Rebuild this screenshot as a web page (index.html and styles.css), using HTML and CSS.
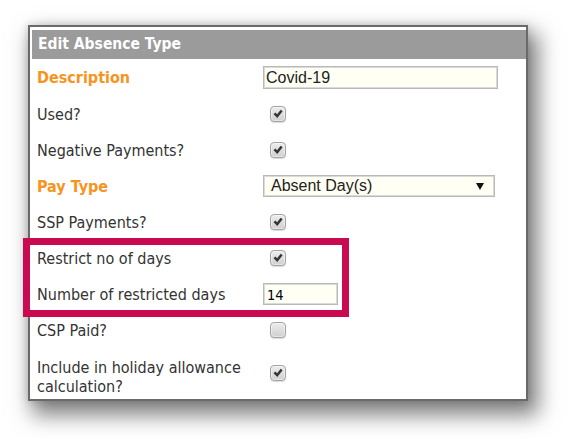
FILE: index.html
```html
<!DOCTYPE html>
<html>
<head>
<meta charset="utf-8">
<link rel="stylesheet" href="styles.css">
</head>
<body>
<div class="frame">
  <div class="header">Edit Absence Type</div>
  <div class="form">
    <div class="row row-first">
      <div class="label req">Description</div>
      <div class="ctrl"><input class="text desc" type="text" value="Covid-19"></div>
    </div>
    <div class="row">
      <div class="label">Used?</div>
      <div class="ctrl"><span class="cb checked"><svg viewBox="0 0 16 16"><polygon points="2.9,8.3 5,6.3 7,8.4 11.1,3.1 13.3,4.9 7.2,12.7"/></svg></span></div>
    </div>
    <div class="row">
      <div class="label">Negative Payments?</div>
      <div class="ctrl"><span class="cb checked"><svg viewBox="0 0 16 16"><polygon points="2.9,8.3 5,6.3 7,8.4 11.1,3.1 13.3,4.9 7.2,12.7"/></svg></span></div>
    </div>
    <div class="row">
      <div class="label req">Pay Type</div>
      <div class="ctrl">
        <div class="select"><span>Absent Day(s)</span><svg class="arrow" viewBox="0 0 8 7"><polygon points="0,0 8,0 4,7"/></svg></div>
      </div>
    </div>
    <div class="row">
      <div class="label">SSP Payments?</div>
      <div class="ctrl"><span class="cb checked"><svg viewBox="0 0 16 16"><polygon points="2.9,8.3 5,6.3 7,8.4 11.1,3.1 13.3,4.9 7.2,12.7"/></svg></span></div>
    </div>
    <div class="row">
      <div class="label">Restrict no of days</div>
      <div class="ctrl"><span class="cb checked"><svg viewBox="0 0 16 16"><polygon points="2.9,8.3 5,6.3 7,8.4 11.1,3.1 13.3,4.9 7.2,12.7"/></svg></span></div>
    </div>
    <div class="row">
      <div class="label">Number of restricted days</div>
      <div class="ctrl"><input class="text num" type="text" value="14"></div>
    </div>
    <div class="row">
      <div class="label">CSP Paid?</div>
      <div class="ctrl"><span class="cb"></span></div>
    </div>
    <div class="row row-last">
      <div class="label two">Include in holiday allowance calculation?</div>
      <div class="ctrl"><span class="cb checked"><svg viewBox="0 0 16 16"><polygon points="2.9,8.3 5,6.3 7,8.4 11.1,3.1 13.3,4.9 7.2,12.7"/></svg></span></div>
    </div>
  </div>
  <div class="highlight"></div>
</div>
</body>
</html>
```

FILE: styles.css
```css
html, body {
  margin: 0;
  padding: 0;
  background: #ffffff;
}

body {
  font-family: "DejaVu Sans", Verdana, sans-serif;
  font-stretch: condensed;
  min-height: 439px;
  padding-bottom: 38px;
  box-sizing: border-box;
}

.frame {
  position: relative;
  box-sizing: border-box;
  margin: 25px 0 0 28px;
  width: 500px;
  height: 376px;
  border: 2px solid #6a6a6a;
  padding: 3px 0 0 2px;
  background: #ffffff;
  box-shadow: 7px 11px 20px 3px rgba(0, 0, 0, 0.5), 0 0 8px rgba(0, 0, 0, 0.15);
}

.header {
  height: 29px;
  background: #9b9b9b;
  color: #ffffff;
  font-weight: bold;
  font-size: 15.5px;
  line-height: 29px;
  padding-left: 6px;
}

.form {
  margin-left: -2px;
}

.row {
  display: flex;
  align-items: center;
  height: 36px;
}

.row-first {
  height: 37px;
}

.row-last {
  height: 50px;
}

.label {
  box-sizing: border-box;
  width: 233px;
  padding-left: 7px;
  font-size: 16px;
  color: #333333;
}

.label.req {
  color: #f7941d;
  font-weight: bold;
}

.label.two {
  line-height: 18.5px;
  margin-top: 9px;
  padding-right: 10px;
}

.ctrl {
  display: flex;
  align-items: center;
}

.text {
  box-sizing: border-box;
  margin: 0;
  background: #fffff3;
  border: 1px solid #b9b9b9;
  box-shadow: inset 0 0 0 1px #dadada;
  outline: none;
}

.desc {
  width: 235px;
  height: 23px;
  padding: 0 0 0 2px;
  font-family: "Liberation Sans", Arial, sans-serif;
  font-size: 16px;
  color: #222222;
}

.num {
  width: 75px;
  height: 22px;
  padding: 1px 0 0 3px;
  font-family: "DejaVu Sans", Tahoma, sans-serif;
  font-stretch: condensed;
  font-size: 14.5px;
  color: #000010;
}

.select {
  box-sizing: border-box;
  position: relative;
  width: 232px;
  height: 22px;
  background: #fffff3;
  border: 1px solid #b9b9b9;
  box-shadow: inset 0 0 0 1px #dadada;
  display: flex;
  align-items: center;
  padding-left: 7px;
  font-family: "Liberation Sans", Arial, sans-serif;
  font-size: 16px;
  color: #222222;
}

.select .arrow {
  position: absolute;
  right: 10px;
  top: 7px;
  width: 8px;
  height: 7px;
  fill: #111111;
}

.cb {
  box-sizing: border-box;
  display: inline-block;
  width: 16px;
  height: 16px;
  margin-left: 7px;
  border: 1px solid #a3a3a3;
  border-radius: 4px;
  background: linear-gradient(#ececec, #d0d0d0);
  box-shadow: inset 0 0 0 1px rgba(255, 255, 255, 0.45), 0 1px 1px rgba(0, 0, 0, 0.15);
}

.cb svg {
  display: block;
  width: 14px;
  height: 14px;
  fill: #353535;
}

.highlight {
  position: absolute;
  box-sizing: border-box;
  left: -7px;
  top: 211px;
  width: 326px;
  height: 79px;
  border: 7px solid #c90a50;
}
```
